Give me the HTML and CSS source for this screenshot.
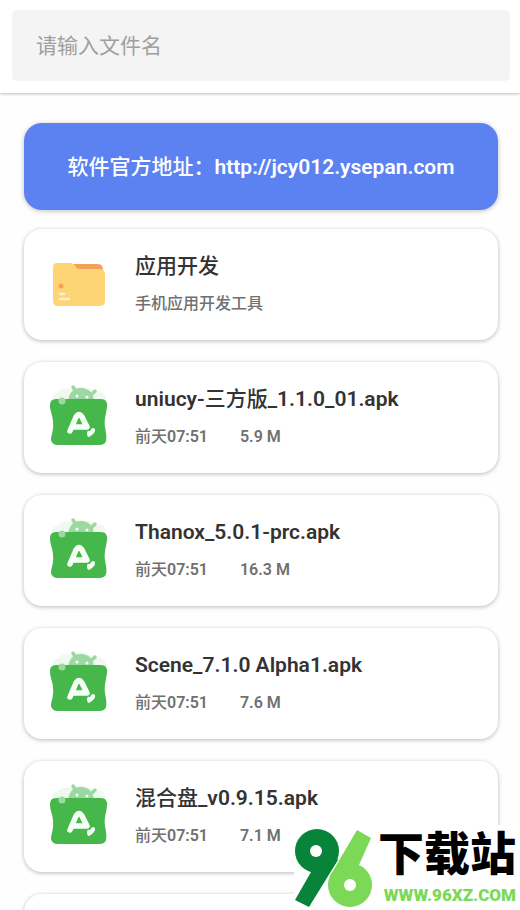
FILE: index.html
```html
<!DOCTYPE html>
<html lang="zh-CN">
<head>
<meta charset="utf-8">
<meta name="viewport" content="width=device-width, initial-scale=1">
<title>文件列表</title>
<link rel="stylesheet" href="styles.css">
</head>
<body>
<svg class="defs" aria-hidden="true">
  <symbol id="apk" viewBox="0 0 60 64">
    <path d="M3 16Q2 10 8 9Q12 3 20 5Q34 0 46 7Q57 6 57 17L50 24H8Z" fill="#f0f9f0"/>
    <path d="M19 19C19 9 25 3 33 4S45 10 45 19Z" fill="#9bd9a0"/>
    <path d="M24 3l3 5M46 7l-4 4" stroke="#9bd9a0" stroke-width="3.5" stroke-linecap="round"/>
    <circle cx="28" cy="12" r="1.5" fill="#fff"/><circle cx="38" cy="13" r="1.5" fill="#fff"/>
    <path d="M7 15H52Q59 15 58 23C57 31 55 35 56 43C57 49 58 53 57 57Q56 61 50 61H9Q3 61 2 56C2 51 5 46 4 38C4 32 1 28 1 21Q1 15 7 15Z" fill="#46b74b"/>
    <circle cx="13" cy="17" r="3.5" fill="#9bd9a0"/>
    <path d="M21 47L27 33Q30 28 33 33L38 43M25 43H36" fill="none" stroke="#f6fff5" stroke-width="5.5" stroke-linecap="round" stroke-linejoin="round"/>
    <path d="M38 49Q38 46 41 47Q43 42 46 45Q47 49 40 53Q38 53 38 49Z" fill="#f6fff5"/>
  </symbol>
</svg>

<header class="topbar">
  <input class="search" type="text" aria-label="请输入文件名" placeholder="请输入文件名">
</header>

<main class="content">
  <a class="banner" href="http://jcy012.ysepan.com"><span class="han">软件官方地址：</span>http://jcy012.ysepan.com</a>
  <ul class="files">
    <li class="card">
      <svg class="icon" viewBox="0 0 60 64" aria-hidden="true">
        <path d="M24 13H49Q54 13 54 19V24H24Z" fill="#f5a05a"/>
        <path d="M8 12H21Q25 12 27 16Q28 18 31 18H51Q56 18 56 24V50Q56 55 51 55H9Q4 55 4 50V16Q4 12 8 12Z" fill="#fed575"/>
        <circle cx="12" cy="35" r="2.5" fill="#f4a261"/>
        <path d="M11 43h4M11 48h9" stroke="#fff0ca" stroke-width="2.5" stroke-linecap="round"/>
      </svg>
      <div class="info"><h2 class="name"><span class="han">应用开发</span></h2><p class="meta"><span class="han">手机应用开发工具</span></p></div>
    </li>
    <li class="card">
      <svg class="icon" aria-hidden="true"><use href="#apk"/></svg>
      <div class="info"><h2 class="name">uniucy-<span class="han">三方版</span>_1.1.0_01.apk</h2><p class="meta"><span><span class="han">前天</span>07:51</span><span>5.9 M</span></p></div>
    </li>
    <li class="card">
      <svg class="icon" aria-hidden="true"><use href="#apk"/></svg>
      <div class="info"><h2 class="name">Thanox_5.0.1-prc.apk</h2><p class="meta"><span><span class="han">前天</span>07:51</span><span>16.3 M</span></p></div>
    </li>
    <li class="card">
      <svg class="icon" aria-hidden="true"><use href="#apk"/></svg>
      <div class="info"><h2 class="name">Scene_7.1.0 Alpha1.apk</h2><p class="meta"><span><span class="han">前天</span>07:51</span><span>7.6 M</span></p></div>
    </li>
    <li class="card">
      <svg class="icon" aria-hidden="true"><use href="#apk"/></svg>
      <div class="info"><h2 class="name"><span class="han">混合盘</span>_v0.9.15.apk</h2><p class="meta"><span><span class="han">前天</span>07:51</span><span>7.1 M</span></p></div>
    </li>
    <li class="card"></li>
  </ul>
</main>

<aside class="mark">
  <svg class="mark-logo" viewBox="0 0 80 84" aria-hidden="true">
    <path d="M17 46L1 74L15 81L44 34L30 24Z" fill="#078439"/>
    <circle cx="23" cy="25" r="22" fill="#078439"/>
    <circle cx="22" cy="25" r="6" fill="#fff"/>
    <path d="M63 4L36 50L56 63L65 39L77 12Z" fill="#7bd957"/>
    <circle cx="56" cy="59" r="22" fill="#7bd957"/>
    <circle cx="56" cy="59" r="6" fill="#fff"/>
  </svg>
  <div class="mark-text">
    <span class="mark-name">下载站</span>
    <span class="mark-url">WWW.96XZ.COM</span>
  </div>
</aside>
</body>
</html>
```
FILE: styles.css
```css
* {
  box-sizing: border-box;
}

body {
  margin: 0;
  height: 100vh;
  overflow: hidden;
  background: #fefefe;
  color: #333;
  font-family: Roboto, "Noto Sans CJK SC", sans-serif;
}

.defs {
  display: none;
}

.han {
  font-weight: 500;
}

.topbar {
  padding: 10px 10px 12px 12px;
  background: #fff;
  box-shadow: 0 1px 3px rgba(0, 0, 0, 0.25);
}

.search {
  display: block;
  width: 100%;
  height: 71px;
  padding: 0 24px;
  border: 0;
  border-radius: 5px;
  background: #f4f4f4;
  color: #333;
  font: inherit;
  font-size: 21px;
}

.search::placeholder {
  color: #a0a0a0;
}

.content {
  padding: 30px 22px 0 24px;
}

.banner {
  display: block;
  padding: 29px 16px 28px;
  border-radius: 18px;
  background: #5b82f0;
  box-shadow: 0 1px 5px rgba(0, 0, 0, 0.25);
  color: #fff;
  font-size: 21px;
  font-weight: 600;
  line-height: 30px;
  text-align: center;
  text-decoration: none;
}

.files {
  display: flex;
  flex-direction: column;
  gap: 22px;
  margin: 19px 0 0;
  padding: 0;
  list-style: none;
}

.card {
  display: flex;
  align-items: center;
  gap: 26px;
  min-height: 111px;
  padding: 0 25px 4px;
  border-radius: 18px;
  background: #fff;
  box-shadow: 0 1px 4px rgba(0, 0, 0, 0.28);
}

.icon {
  flex: none;
  width: 60px;
  height: 64px;
}

.info {
  padding-top: 2px;
}

.name {
  margin: 0;
  font-size: 21px;
  font-weight: 600;
  line-height: 30px;
}

.meta {
  display: flex;
  gap: 32px;
  margin: 11px 0 0;
  color: #707070;
  font-size: 16px;
  font-weight: 600;
  line-height: 24px;
}

.mark {
  position: fixed;
  right: 0;
  bottom: 0;
  display: flex;
  gap: 4px;
  padding: 1px 4px 0 0;
  background: #fff;
}

.mark-logo {
  width: 80px;
  height: 84px;
}

.mark-text {
  display: flex;
  flex-direction: column;
  align-items: flex-end;
}

.mark-name {
  color: #000;
  font-size: 46px;
  font-weight: 900;
  line-height: 56px;
}

.mark-url {
  color: #7bd957;
  font-size: 17px;
  font-weight: 900;
  line-height: 26px;
}
```
